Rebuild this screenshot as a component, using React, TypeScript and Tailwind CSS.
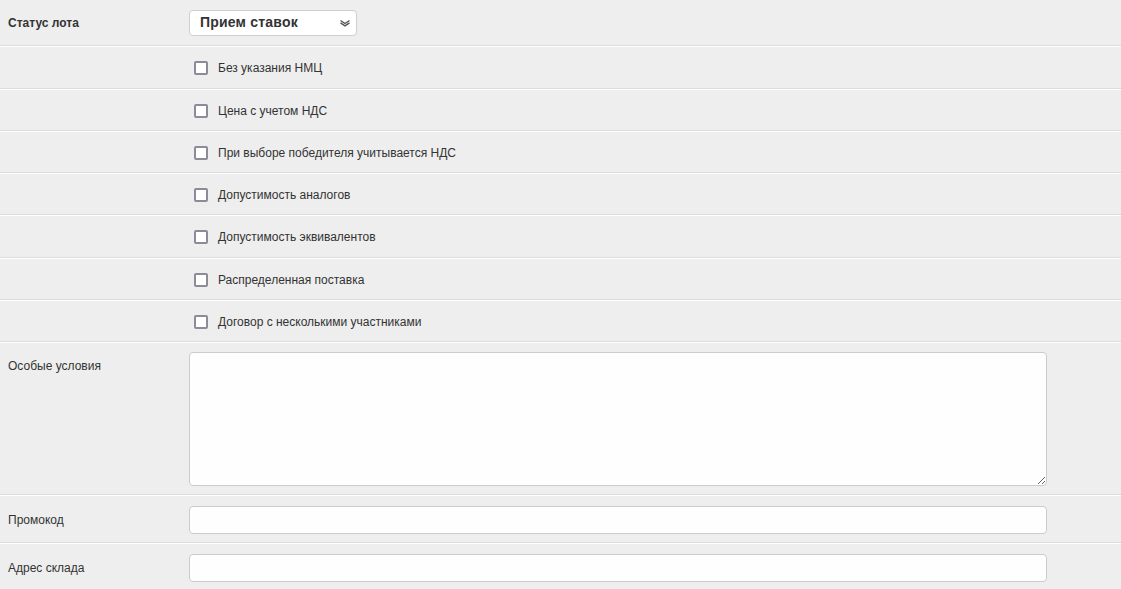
const CHECKS = [
  "Без указания НМЦ",
  "Цена с учетом НДС",
  "При выборе победителя учитывается НДС",
  "Допустимость аналогов",
  "Допустимость эквивалентов",
  "Распределенная поставка",
  "Договор с несколькими участниками",
];

function Sep() {
  return (
    <div>
      <div className="h-px bg-[#dcdcdc]" />
      <div className="h-px bg-white" />
    </div>
  );
}

function Row({ label, bold, children, className }: { label?: string; bold?: boolean; children: React.ReactNode; className?: string }) {
  return (
    <div className={`flex ${className ?? ""}`}>
      <div className={`w-[189px] shrink-0 pl-2 text-[12px] text-[#333] ${bold ? "font-bold" : "pt-[5px]"}`}>{label}</div>
      <div className="flex-1">{children}</div>
    </div>
  );
}

export default function App() {
  return (
    <div
      className="w-[1121px] h-[589px] overflow-hidden bg-[#eeeeee] text-[#333]"
      style={{ fontFamily: '"Liberation Sans", Arial, sans-serif' }}
    >
      <Row label="Статус лота" bold className="h-[45px] items-center">
        <div className="w-[168px] h-[26px] bg-white border border-[#cfcfcf] rounded-[4px] flex items-center justify-between pl-[10px] pr-[5px]">
          <span className="text-[14px] font-bold text-[#333] tracking-[0.2px]">Прием ставок</span>
          <svg width="12" height="8" viewBox="0 0 12 8" className="text-[#555]">
            <path d="M1.5 1.5 L6 4.5 L10.5 1.5" fill="none" stroke="currentColor" strokeWidth="1.4" />
            <path d="M1.5 3.8 L6 6.8 L10.5 3.8" fill="none" stroke="currentColor" strokeWidth="1.4" />
          </svg>
        </div>
      </Row>
      <Sep />
      {CHECKS.map((c, i) => (
        <div key={c}>
          <div className={`flex ${i === 0 || i === 4 ? "h-[41px]" : "h-[40px]"} items-center pt-px`}>
            <label className="ml-[189px] flex items-center pl-[5px] gap-[10px] text-[12px] text-[#333]">
              <span className="w-[14px] h-[14px] rounded-[2px] border-2 border-[#8d8b99] bg-white" />
              {c}
            </label>
          </div>
          <Sep />
        </div>
      ))}
      <Row label="Особые условия" className="h-[151px] pt-[9px]">
        <textarea className="block w-[858px] h-[134px] bg-[#fefefe] border border-[#cccccc] rounded-[4px] outline-none" />
      </Row>
      <Sep />
      <Row label="Промокод" className="h-[46px] pt-[10px]">
        <input className="block w-[858px] h-[28px] bg-[#fefefe] border border-[#cccccc] rounded-[4px] outline-none" />
      </Row>
      <Sep />
      <Row label="Адрес склада" className="h-[46px] pt-[10px]">
        <input className="block w-[858px] h-[28px] bg-[#fefefe] border border-[#cccccc] rounded-[4px] outline-none" />
      </Row>
    </div>
  );
}
